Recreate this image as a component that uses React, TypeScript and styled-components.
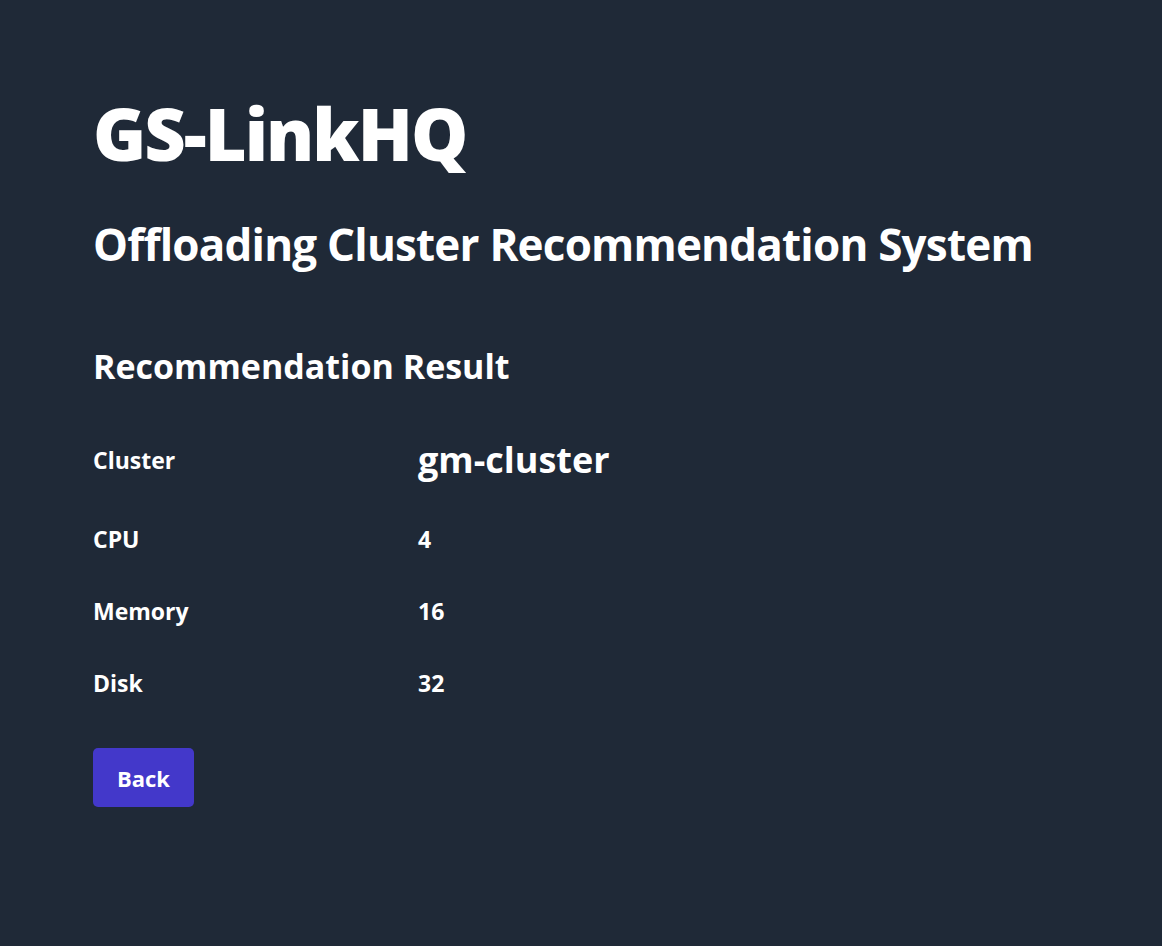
import React from 'react';
import styled, { createGlobalStyle } from 'styled-components';

const GlobalStyle = createGlobalStyle`
  html, body {
    margin: 0;
    padding: 0;
    background-color: #1f2937;
  }
  body {
    font-family: 'Open Sans', 'Noto Sans', sans-serif;
    color: #ffffff;
  }
`;

const Page = styled.div`
  min-height: 946px;
  box-sizing: border-box;
  padding: 97px 93px;
  background-color: #1f2937;
`;

const Title = styled.h1`
  margin: 0;
  font-size: 72px;
  font-weight: 800;
  line-height: 72px;
  letter-spacing: -2px;
`;

const Subtitle = styled.h2`
  margin: 49px 0 0;
  font-size: 44px;
  font-weight: 700;
  line-height: 52px;
  letter-spacing: -0.8px;
`;

const SectionTitle = styled.h3`
  margin: 76px 0 0;
  font-size: 34px;
  font-weight: 700;
  line-height: 40px;
`;

const Table = styled.div`
  margin-top: 51px;
  display: grid;
  grid-template-columns: 325px 1fr;
  row-gap: 40px;
  align-items: center;
`;

const Label = styled.div`
  font-size: 23px;
  font-weight: 700;
  line-height: 32px;
`;

const Value = styled.div<{ $large?: boolean }>`
  font-size: ${(p) => (p.$large ? '36px' : '23px')};
  font-weight: 700;
  line-height: ${(p) => (p.$large ? '46px' : '32px')};
`;

const Button = styled.button`
  display: block;
  margin-top: 49px;
  width: 101px;
  height: 59px;
  padding: 0;
  border: none;
  border-radius: 5px;
  background-color: #4338ca;
  color: #ffffff;
  font-family: inherit;
  font-size: 22px;
  font-weight: 700;
  cursor: pointer;
`;

const rows = [
  { label: 'Cluster', value: 'gm-cluster', large: true },
  { label: 'CPU', value: '4' },
  { label: 'Memory', value: '16' },
  { label: 'Disk', value: '32' },
];

const App = () => {
  return (
    <>
      <GlobalStyle />
      <Page>
        <Title>GS-LinkHQ</Title>
        <Subtitle>Offloading Cluster Recommendation System</Subtitle>
        <SectionTitle>Recommendation Result</SectionTitle>
        <Table>
          {rows.map((row) => (
            <React.Fragment key={row.label}>
              <Label>{row.label}</Label>
              <Value $large={row.large}>{row.value}</Value>
            </React.Fragment>
          ))}
        </Table>
        <Button type="button">Back</Button>
      </Page>
    </>
  );
};

export default App;
